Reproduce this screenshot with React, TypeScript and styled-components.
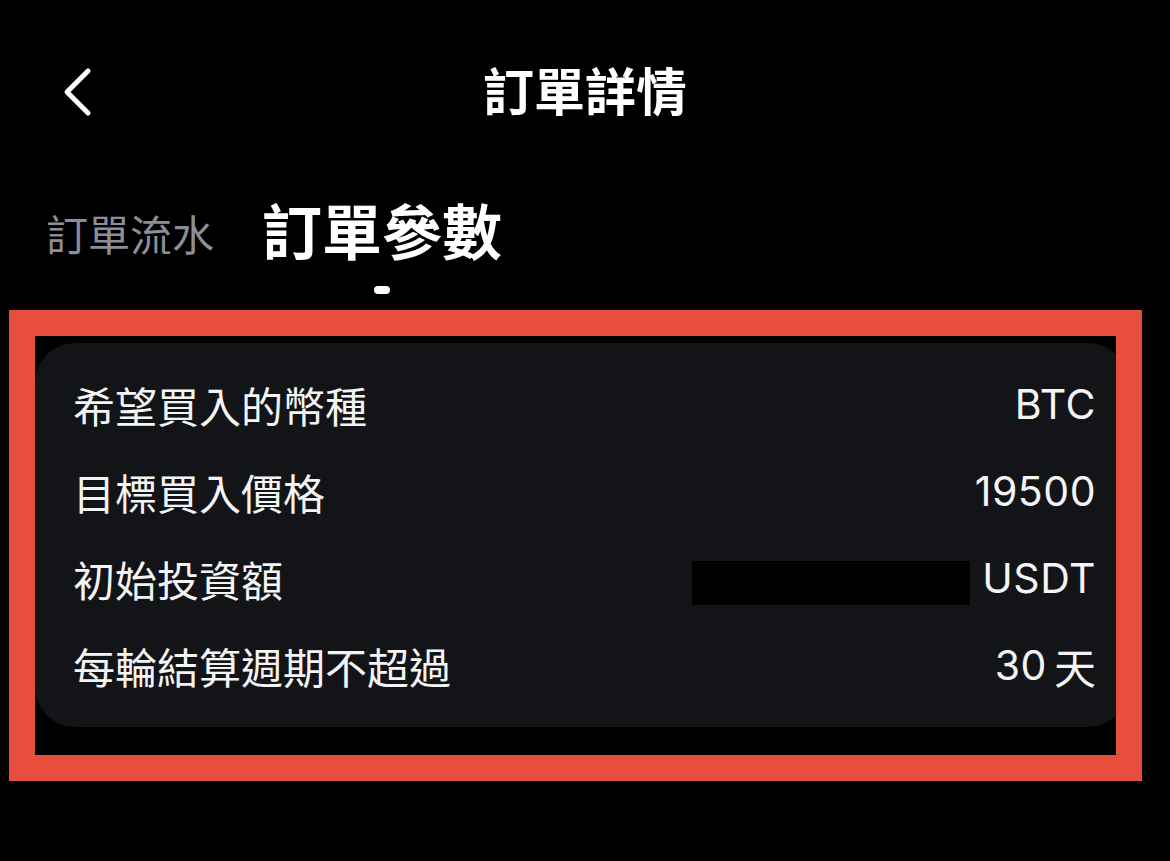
import * as React from 'react'
import styled, { createGlobalStyle } from 'styled-components'

const GlobalStyle = createGlobalStyle`
  html, body {
    margin: 0;
    padding: 0;
    background: #000;
  }
  body {
    width: 1170px;
    min-height: 861px;
    font-family: 'Noto Sans CJK TC', 'Noto Sans', sans-serif;
    color: #f4f4f5;
  }
`

const Screen = styled.main`
  display: flex;
  flex-direction: column;
  width: 1170px;
  min-height: 861px;
  background: #000;
`

const Header = styled.header`
  display: grid;
  grid-template-columns: 1fr auto 1fr;
  align-items: center;
  height: 184px;
  padding: 0 63px;
`

const BackButton = styled.button`
  display: flex;
  align-items: center;
  justify-self: start;
  padding: 0;
  border: none;
  background: none;
  cursor: pointer;
`

const Title = styled.h1`
  margin: -6px 0 0;
  font-size: 51px;
  font-weight: 700;
  line-height: 1;
  color: #fff;
`

const TabBar = styled.nav`
  display: flex;
  align-items: flex-start;
  gap: 48px;
  padding: 9px 0 0 46px;
`

const Tab = styled.div`
  display: flex;
  flex-direction: column;
  align-items: center;
`

const TabLabel = styled.span<{ $active?: boolean }>`
  font-size: ${(p) => (p.$active ? '60px' : '42px')};
  font-weight: ${(p) => (p.$active ? 700 : 400)};
  line-height: 72px;
  color: ${(p) => (p.$active ? '#fff' : '#8c8f97')};
  margin-top: ${(p) => (p.$active ? '0' : '4px')};
`

const TabIndicator = styled.span`
  width: 16px;
  height: 8px;
  margin-top: 21px;
  border-radius: 4px;
  background: #fff;
`

const HighlightFrame = styled.section`
  margin: 16px 28px 0 9px;
  padding: 7px 0 28px 0;
  border: 26px solid #e84e3e;
  overflow: hidden;
`

const Card = styled.div`
  display: flex;
  flex-direction: column;
  margin-right: -12px;
  padding: 18px 32px 18px 38px;
  border-radius: 40px;
  background: #131418;
`

const Row = styled.div`
  display: flex;
  align-items: center;
  justify-content: space-between;
  height: 87px;
`

const Label = styled.span`
  font-size: 42px;
  line-height: 1;
  color: #f4f4f5;
`

const Value = styled.span`
  display: flex;
  align-items: center;
  font-family: Inter, 'Noto Sans CJK TC', sans-serif;
  font-size: 41px;
  letter-spacing: 0.5px;
  line-height: 1;
  color: #f4f4f5;
`

const Unit = styled.span`
  margin-left: 7px;
  font-family: 'Noto Sans CJK TC', sans-serif;
  font-size: 42px;
  letter-spacing: 0;
`

const Redacted = styled.span`
  width: 278px;
  height: 44px;
  margin: 8px 12px 0 0;
  background: #000;
`

const ChevronLeft = () => (
  <svg width="30" height="50" viewBox="0 0 30 50" fill="none">
    <path
      d="M25 4 L4 25 L25 46"
      stroke="#fff"
      strokeWidth="5"
      strokeLinecap="round"
      strokeLinejoin="round"
    />
  </svg>
)

export default function App() {
  return (
    <Screen>
      <GlobalStyle />
      <Header>
        <BackButton aria-label="返回">
          <ChevronLeft />
        </BackButton>
        <Title>訂單詳情</Title>
        <span />
      </Header>

      <TabBar>
        <Tab>
          <TabLabel>訂單流水</TabLabel>
        </Tab>
        <Tab>
          <TabLabel $active>訂單參數</TabLabel>
          <TabIndicator />
        </Tab>
      </TabBar>

      <HighlightFrame>
        <Card>
          <Row>
            <Label>希望買入的幣種</Label>
            <Value>BTC</Value>
          </Row>
          <Row>
            <Label>目標買入價格</Label>
            <Value>19500</Value>
          </Row>
          <Row>
            <Label>初始投資額</Label>
            <Value>
              <Redacted />
              USDT
            </Value>
          </Row>
          <Row>
            <Label>每輪結算週期不超過</Label>
            <Value>
              30
              <Unit>天</Unit>
            </Value>
          </Row>
        </Card>
      </HighlightFrame>
    </Screen>
  )
}
